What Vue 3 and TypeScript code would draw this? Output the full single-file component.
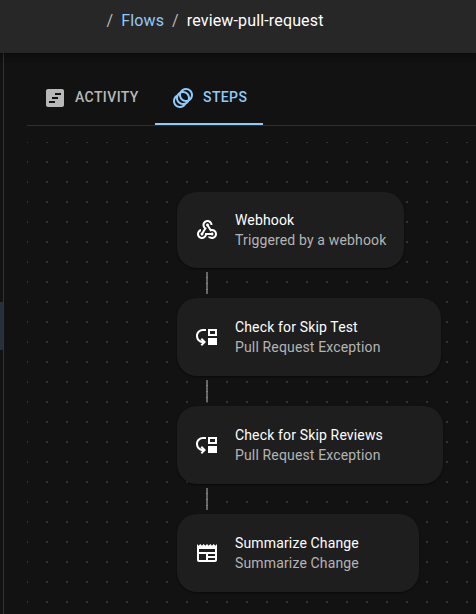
<script setup lang="ts">
interface Step {
  title: string
  subtitle: string
  icon: string
  size: string
}

const icons: Record<string, string> = {
  webhook:
    'M10 15h5.88c.27-.31.67-.5 1.12-.5.83 0 1.5.67 1.5 1.5s-.67 1.5-1.5 1.5c-.44 0-.84-.19-1.12-.5H11.9c-.46 2.28-2.48 4-4.9 4-2.76 0-5-2.24-5-5 0-2.42 1.72-4.44 4-4.9v2.07c-1.16.41-2 1.53-2 2.83 0 1.65 1.35 3 3 3s3-1.35 3-3v-1zm2.5-11c1.65 0 3 1.35 3 3h2c0-2.76-2.24-5-5-5s-5 2.24-5 5c0 1.43.6 2.71 1.55 3.62l-2.35 3.9c-.68.14-1.2.75-1.2 1.48 0 .83.67 1.5 1.5 1.5s1.5-.67 1.5-1.5c0-.16-.02-.31-.07-.45l3.38-5.63C10.49 9.61 9.5 8.42 9.5 7c0-1.65 1.35-3 3-3zm4.5 9c-.64 0-1.23.2-1.72.54l-3.05-5.07C11.53 8.35 11 7.74 11 7c0-.83.67-1.5 1.5-1.5S14 6.17 14 7c0 .15-.02.29-.06.43l2.19 3.65c.28-.05.57-.08.87-.08 2.76 0 5 2.24 5 5s-2.24 5-5 5c-1.85 0-3.47-1.01-4.33-2.5h2.67c.48.32 1.05.5 1.66.5 1.65 0 3-1.35 3-3s-1.35-3-3-3z',
  moveDown:
    'M3 11c0 2.45 1.76 4.47 4.08 4.91l-1.49-1.49L7 13l4 4.01L7 21l-1.41-1.41 1.58-1.58v-.06C3.7 17.54 1 14.58 1 11c0-3.87 3.13-7 7-7h3v2H8c-2.76 0-5 2.24-5 5zm19 0V4h-9v7h9zm-2-2h-5V6h5v3zm-7 4h9v7h-9z',
  newspaper:
    'm22 3-1.67 1.67L18.67 3 17 4.67 15.33 3l-1.66 1.67L12 3l-1.67 1.67L8.67 3 7 4.67 5.33 3 3.67 4.67 2 3v16c0 1.1.9 2 2 2h16c1.1 0 2-.9 2-2V3zM11 19H4v-6h7v6zm9 0h-7v-2h7v2zm0-4h-7v-2h7v2zm0-4H4V8h16v3z',
}

const steps: Step[] = [
  { title: 'Webhook', subtitle: 'Triggered by a webhook', icon: 'webhook', size: 'trigger' },
  { title: 'Check for Skip Test', subtitle: 'Pull Request Exception', icon: 'moveDown', size: 'medium' },
  { title: 'Check for Skip Reviews', subtitle: 'Pull Request Exception', icon: 'moveDown', size: 'wide' },
  { title: 'Summarize Change', subtitle: 'Summarize Change', icon: 'newspaper', size: 'narrow' },
]
</script>

<template>
  <div class="page">
    <header class="topbar">
      <nav class="crumbs">
        <span class="sep">/</span>
        <a class="link">Flows</a>
        <span class="sep">/</span>
        <span class="current">review-pull-request</span>
      </nav>
    </header>
    <div class="body">
      <aside class="rail"><div class="rail-active"></div></aside>
      <main class="content">
        <div class="tabs">
          <div class="tab tab-activity">
            <svg class="icon" viewBox="0 0 24 24">
              <path d="M19 3H5c-1.1 0-2 .9-2 2v14c0 1.1.9 2 2 2h14c1.1 0 2-.9 2-2V5c0-1.1-.9-2-2-2zm-7 14H6v-2h6v2zm3-4H9v-2h6v2zm3-4h-6V7h6v2z" />
            </svg>
            <span class="tab-label">ACTIVITY</span>
          </div>
          <div class="tab tab-steps">
            <svg class="icon" viewBox="0 0 24 24">
              <path d="M15 2c-2.71 0-5.05 1.54-6.22 3.78-1.28.67-2.34 1.72-3 3C3.54 9.95 2 12.29 2 15c0 3.87 3.13 7 7 7 2.71 0 5.05-1.54 6.22-3.78 1.28-.67 2.34-1.72 3-3C20.46 14.05 22 11.71 22 9c0-3.87-3.13-7-7-7zM9 20c-2.76 0-5-2.24-5-5 0-1.12.37-2.16 1-3 0 3.87 3.13 7 7 7-.84.63-1.88 1-3 1zm3-3c-2.76 0-5-2.24-5-5 0-1.12.37-2.16 1-3 0 3.86 3.13 6.99 7 7-.84.63-1.88 1-3 1zm4.7-3.3c-.53.19-1.1.3-1.7.3-2.76 0-5-2.24-5-5 0-.6.11-1.17.3-1.7.53-.19 1.1-.3 1.7-.3 2.76 0 5 2.24 5 5 0 .6-.11 1.17-.3 1.7zM19 12c0-3.86-3.13-6.99-7-7 .84-.63 1.87-1 3-1 2.76 0 5 2.24 5 5 0 1.12-.37 2.16-1 3z" />
            </svg>
            <span class="tab-label">STEPS</span>
          </div>
        </div>
        <div class="canvas">
          <template v-for="(step, i) in steps" :key="i">
            <div v-if="i > 0" class="connector"></div>
            <div class="card" :class="step.size">
              <svg class="icon" viewBox="0 0 24 24"><path :d="icons[step.icon]" /></svg>
              <div class="labels">
                <div class="title">{{ step.title }}</div>
                <div class="subtitle">{{ step.subtitle }}</div>
              </div>
            </div>
          </template>
        </div>
      </main>
    </div>
  </div>
</template>

<style>
body {
  background: #121212;
  overflow: hidden;
}
</style>

<style scoped>
.page {
  box-sizing: border-box;
  height: 614px;
  display: flex;
  flex-direction: column;
  background: #121212;
  color: #fff;
  font-family: Roboto, "Liberation Sans", sans-serif;
  font-size: 14px;
  line-height: 20px;
  letter-spacing: 0.15px;
  white-space: nowrap;
  overflow: hidden;
}
.icon {
  width: 24px;
  height: 24px;
  flex: none;
  fill: currentColor;
}
.topbar {
  position: relative;
  z-index: 1;
  flex: none;
  height: 53px;
  background: #272727;
  box-shadow: 0 2px 4px -1px rgba(0, 0, 0, 0.2), 0 4px 5px rgba(0, 0, 0, 0.14), 0 1px 10px rgba(0, 0, 0, 0.12);
}
.crumbs {
  display: flex;
  gap: 8px;
  padding: 9px 0 0 106.4px;
  font-size: 16px;
  line-height: 24px;
}
.sep {
  color: #b9b9b9;
}
.link {
  color: #90caf9;
}
.body {
  flex: 1;
  display: flex;
  min-height: 0;
}
.rail {
  flex: none;
  width: 3px;
  padding-top: 249px;
  border-right: 1px solid #333;
}
.rail-active {
  height: 48px;
  background: #25303a;
}
.content {
  flex: 1;
  display: flex;
  flex-direction: column;
  padding: 17px 0 0 23px;
}
.tabs {
  flex: none;
  display: flex;
  height: 55px;
  border-bottom: 1px solid #303030;
  font-weight: 500;
  letter-spacing: 0.4px;
}
.tab {
  box-sizing: border-box;
  display: flex;
  align-items: center;
  height: 55px;
  padding: 1px 16px 0;
}
.tab-label {
  padding-bottom: 2px;
}
.tab-activity {
  width: 128px;
  gap: 8px;
  color: #b8b8b8;
}
.tab-steps {
  width: 108px;
  gap: 8px;
  padding-top: 3px;
  color: #90caf9;
  border-bottom: 2px solid #90caf9;
}
.canvas {
  flex: 1;
  margin-top: 16px;
  padding: 50px 0 0 150px;
  background-image: conic-gradient(from 270deg at 2px 2px, #333 25%, transparent 0);
  background-size: 20px 20px;
  background-position: -1px -1px;
}
.card {
  box-sizing: border-box;
  display: flex;
  align-items: center;
  gap: 16px;
  height: 78px;
  padding-left: 18px;
  border-radius: 20px;
  background: #1e1e1e;
  box-shadow: 0 1px 2px rgba(0, 0, 0, 0.5);
}
.trigger {
  width: 227px;
  height: 76px;
}
.medium {
  width: 264px;
}
.wide {
  width: 266px;
}
.narrow {
  width: 242px;
}
.subtitle {
  color: #b4b4b4;
}
.connector {
  width: 2px;
  height: 22px;
  margin: 4px 0 4px 29px;
  background: repeating-linear-gradient(#666 0 5px, #808080 5px 6px);
}
</style>
